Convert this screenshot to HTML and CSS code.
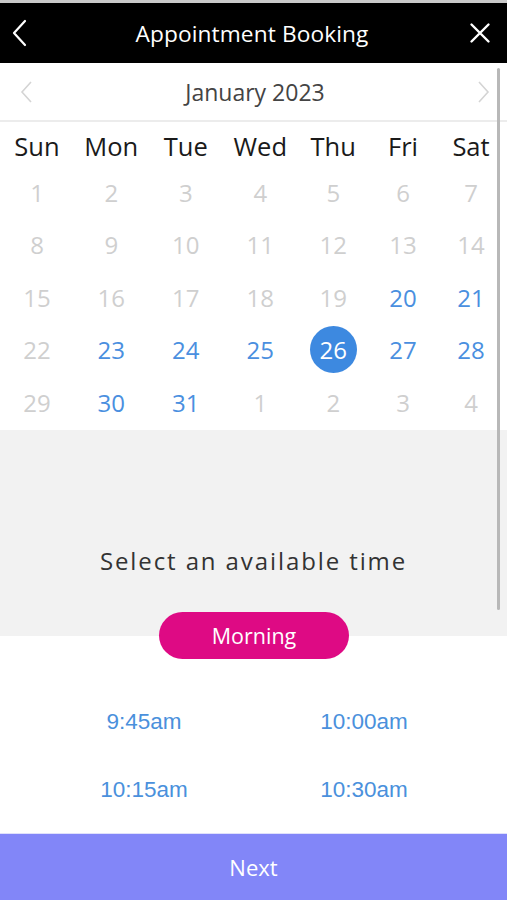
FILE: index.html
```html
<!DOCTYPE html>
<html>
<head>
<meta charset="utf-8">
<link rel="stylesheet" href="styles.css">
</head>
<body>
<div class="app">
  <div class="topline"></div>
  <header class="header">
    <svg class="hicon back" width="20" height="28" viewBox="0 0 20 28"><polyline points="15,2 4,14 15,26" fill="none" stroke="#fff" stroke-width="2.2" stroke-linecap="round" stroke-linejoin="round"/></svg>
    <div class="title">Appointment Booking</div>
    <svg class="hicon close" width="22" height="22" viewBox="0 0 22 22"><path d="M2.5 2.5 L19.5 19.5 M19.5 2.5 L2.5 19.5" fill="none" stroke="#fff" stroke-width="2.4" stroke-linecap="round"/></svg>
  </header>
  <div class="month">
    <svg class="mchev" width="14" height="24" viewBox="0 0 14 24"><polyline points="11,2 2,12 11,22" fill="none" stroke="#d4d4d4" stroke-width="1.6"/></svg>
    <div class="mtitle">January 2023</div>
    <svg class="mchev" width="14" height="24" viewBox="0 0 14 24"><polyline points="3,2 12,12 3,22" fill="none" stroke="#d4d4d4" stroke-width="1.6"/></svg>
  </div>
  <div class="cal">
    <div class="wd">Sun</div><div class="wd">Mon</div><div class="wd">Tue</div><div class="wd">Wed</div><div class="wd">Thu</div><div class="wd">Fri</div><div class="wd">Sat</div>
    <div class="d off">1</div><div class="d off">2</div><div class="d off">3</div><div class="d off">4</div><div class="d off">5</div><div class="d off">6</div><div class="d off">7</div>
    <div class="d off">8</div><div class="d off">9</div><div class="d off">10</div><div class="d off">11</div><div class="d off">12</div><div class="d off">13</div><div class="d off">14</div>
    <div class="d off">15</div><div class="d off">16</div><div class="d off">17</div><div class="d off">18</div><div class="d off">19</div><div class="d on">20</div><div class="d on">21</div>
    <div class="d off">22</div><div class="d on">23</div><div class="d on">24</div><div class="d on">25</div><div class="d sel"><span>26</span></div><div class="d on">27</div><div class="d on">28</div>
    <div class="d off">29</div><div class="d on">30</div><div class="d on">31</div><div class="d off">1</div><div class="d off">2</div><div class="d off">3</div><div class="d off">4</div>
  </div>
  <div class="gray">
    <div class="prompt">Select an available time</div>
  </div>
  <div class="pillwrap"><div class="pill">Morning</div></div>
  <div class="times">
    <div class="t">9:45am</div><div class="t">10:00am</div>
    <div class="t">10:15am</div><div class="t">10:30am</div>
  </div>
  <div class="next">Next</div>
  <div class="scrollbar"></div>
</div>
</body>
</html>
```
FILE: styles.css
```css
* { box-sizing: border-box; }
html, body { margin: 0; padding: 0; }
body { width: 507px; height: 900px; overflow: hidden; background: #fff; font-family: "Open Sans", "DejaVu Sans", sans-serif; }
.app { position: relative; width: 507px; height: 900px; display: flex; flex-direction: column; }
.topline { height: 3px; background: #c9c9c9; }
.header { height: 60px; background: #000; display: grid; grid-template-columns: 1fr auto 1fr; align-items: center; padding: 0 16px 0 10px; }
.back { justify-self: start; }
.close { justify-self: end; }
.title { color: #fff; font-size: 22.7px; letter-spacing: 0.1px; padding-left: 3px; }
.hicon { display: block; }
.month { height: 59px; display: flex; align-items: center; justify-content: space-between; padding: 0 17px 0 20px; border-bottom: 2px solid #ececec; }
.mtitle { font-size: 23px; color: #444; }
.cal { display: grid; grid-template-columns: 74px 74.5px 74.5px 74.5px 71.5px 68px 68px; grid-template-rows: 44px repeat(5, 52.5px); align-items: center; justify-items: center; padding-bottom: 1px; }
.wd { font-size: 25.5px; color: #1a1a1a; padding-top: 4px; }
.d { font-size: 24px; }
.off { color: #cfcfcf; }
.on { color: #4a8fdf; }
.sel span { display: flex; width: 47px; height: 47px; border-radius: 50%; background: #3d89e0; color: #fff; align-items: center; justify-content: center; }
.gray { height: 206px; background: #f2f2f2; display: flex; align-items: flex-end; justify-content: center; padding-bottom: 59px; }
.prompt { font-size: 24px; letter-spacing: 1.9px; color: #333; }
.pillwrap { display: flex; justify-content: center; margin-top: -24px; padding-left: 1px; }
.pill { width: 190px; height: 47px; border-radius: 24px; background: #de0a84; color: #fff; font-size: 21.5px; display: flex; align-items: center; justify-content: center; }
.times { display: grid; grid-template-columns: 220px 220px; grid-template-rows: 68px 68px; margin: 29px 0 0 34px; align-items: center; justify-items: center; }
.t { font-family: "Liberation Sans", Arial, sans-serif; font-size: 22.5px; color: #4a90dc; }
.next { margin-top: auto; height: 67px; background: #8286f8; border-top: 1px solid #dfe0fb; color: #fff; font-size: 22px; display: flex; align-items: center; justify-content: center; }
.scrollbar { position: absolute; left: 497px; top: 68px; width: 3px; height: 542px; background: #b8b8b8; border-radius: 2px; }
```
